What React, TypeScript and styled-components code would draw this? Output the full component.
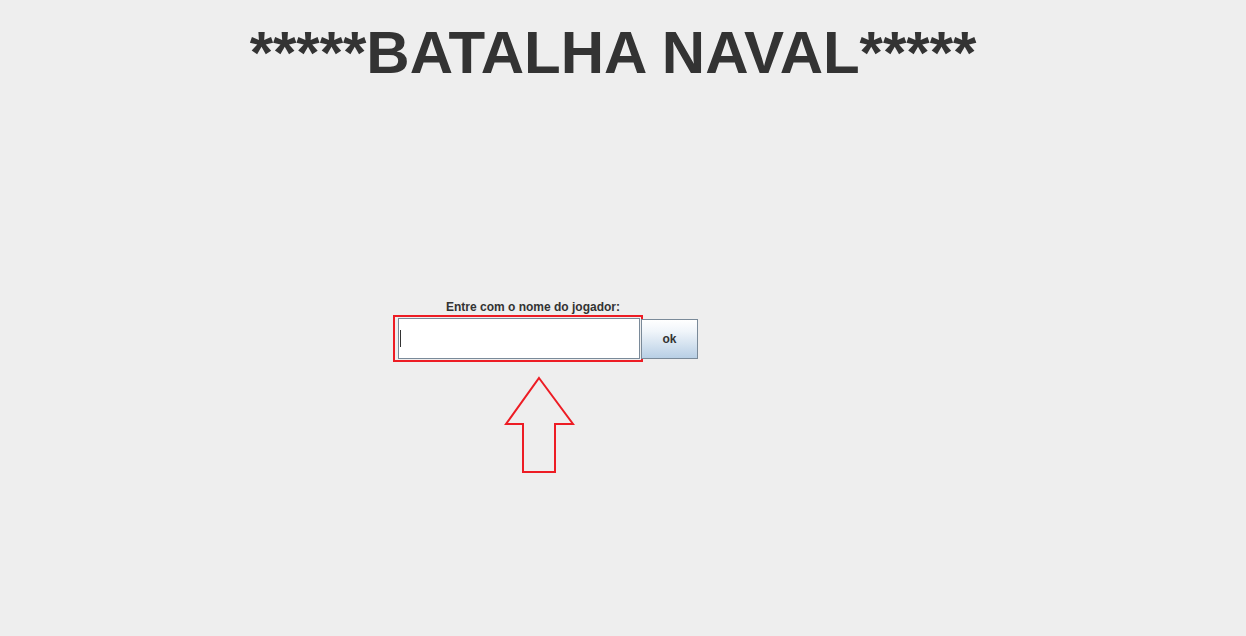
import React from 'react';
import styled, { createGlobalStyle } from 'styled-components';

const GlobalStyle = createGlobalStyle`
  html, body {
    margin: 0;
    padding: 0;
    background-color: #eeeeee;
  }
  body {
    font-family: "Liberation Sans", Arial, sans-serif;
  }
  * {
    box-sizing: border-box;
  }
`;

const Page = styled.div`
  display: flex;
  flex-direction: column;
  width: 1246px;
  height: 636px;
  background-color: #eeeeee;
  overflow: hidden;
`;

const Title = styled.h1`
  margin: 23px 0 0;
  font-size: 60px;
  line-height: 60px;
  font-weight: 700;
  color: #333333;
  text-align: center;
  padding-right: 20px;
`;

const Form = styled.div`
  display: flex;
  flex-direction: column;
  margin: 217px 0 0 393px;
`;

const Label = styled.label`
  width: 280px;
  font-size: 12px;
  line-height: 14px;
  font-weight: 700;
  color: #333333;
  text-align: center;
`;

const Row = styled.div`
  display: flex;
  align-items: center;
  margin-top: 1px;
`;

const Highlight = styled.div`
  display: flex;
  width: 250px;
  height: 47px;
  border: 2px solid #ed1c24;
  padding: 1px 1px 1px 3px;
`;

const Field = styled.div`
  display: flex;
  align-items: center;
  flex: 1;
  background-color: #ffffff;
  border: 1px solid #7a8a99;
  padding-left: 1px;
`;

const Caret = styled.span`
  width: 1px;
  height: 17px;
  background-color: #333333;
`;

const OkButton = styled.button`
  width: 57px;
  height: 40px;
  margin-left: -2px;
  border: 1px solid #7a8a99;
  background: linear-gradient(#ffffff 0%, #f0f5fa 30%, #b8cfe5 100%);
  font-family: "Liberation Sans", Arial, sans-serif;
  font-size: 12px;
  font-weight: 700;
  color: #333333;
  padding: 0;
`;

const Arrow = styled.svg`
  display: block;
  margin: 14px 0 0 111px;
`;

const App = () => (
  <Page>
    <GlobalStyle />
    <Title>*****BATALHA NAVAL*****</Title>
    <Form>
      <Label>Entre com o nome do jogador:</Label>
      <Row>
        <Highlight>
          <Field>
            <Caret />
          </Field>
        </Highlight>
        <OkButton>ok</OkButton>
      </Row>
      <Arrow width="72" height="98" viewBox="0 0 72 98">
        <path
          d="M35 2 L69 48 L51 48 L51 96 L19 96 L19 48 L2 48 Z"
          fill="none"
          stroke="#ed1c24"
          strokeWidth="2"
        />
      </Arrow>
    </Form>
  </Page>
);

export default App;
